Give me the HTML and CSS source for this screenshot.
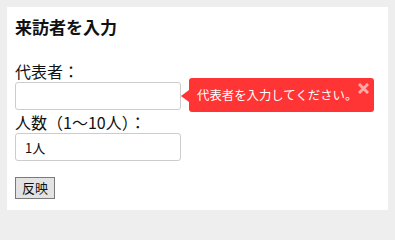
FILE: index.html
```html
<!DOCTYPE html>
<html lang="ja">
<head>
<meta charset="utf-8">
<link rel="stylesheet" href="styles.css">
</head>
<body>
<div class="panel">
  <h3 class="title">来訪者を入力</h3>
  <label class="label first">代表者：</label>
  <div class="field">
    <input class="input" type="text" value="">
    <div class="tip">
      <span class="tip-text">代表者を入力してください。</span>
      <svg class="tip-close" width="11" height="11" viewBox="0 0 11 11"><path d="M2 2 L9 9 M9 2 L2 9" stroke="currentColor" stroke-width="3" stroke-linecap="square"/></svg>
    </div>
  </div>
  <label class="label">人数（1〜10人）：</label>
  <div class="field">
    <input class="input" type="text" value="1人">
  </div>
  <button class="btn">反映</button>
</div>
</body>
</html>
```
FILE: styles.css
```css
html, body {
  margin: 0;
  padding: 0;
}
body {
  background: #eeeeee;
  padding: 7px;
  font-family: "Noto Sans CJK JP", "Noto Sans", sans-serif;
  color: #111;
}
.panel {
  background: #fff;
  width: 381px;
  box-sizing: border-box;
  padding: 10px 8px 11px;
  display: flex;
  flex-direction: column;
  align-items: flex-start;
}
.title {
  margin: 0;
  font-size: 17px;
  line-height: 20px;
  font-weight: bold;
}
.label {
  display: block;
  font-size: 16px;
  line-height: 18px;
  margin-top: 3px;
}
.label.first {
  margin-top: 25px;
}
.field {
  position: relative;
  margin-top: 2px;
}
.input {
  display: block;
  width: 166px;
  height: 28px;
  box-sizing: border-box;
  border: 1px solid #cccccc;
  border-radius: 3px;
  padding: 0 9px;
  font-family: "Noto Sans CJK JP", sans-serif;
  font-size: 13px;
  color: #111;
  outline: none;
}
.tip {
  position: absolute;
  left: 174px;
  top: -4px;
  width: 185px;
  height: 34px;
  box-sizing: border-box;
  background: #ff3434;
  border-radius: 3px;
  display: flex;
  align-items: center;
  padding-left: 8px;
}
.tip::before {
  content: "";
  position: absolute;
  left: -8px;
  top: 12px;
  border-style: solid;
  border-width: 6px 8px 6px 0;
  border-color: transparent #ff3434 transparent transparent;
}
.tip-text {
  color: #fff;
  font-size: 12.4px;
  line-height: 16px;
}
.tip-close {
  position: absolute;
  right: 5px;
  top: 5px;
  color: #ffa8a8;
}
.btn {
  margin-top: 16px;
  width: 40px;
  height: 22px;
  padding: 0;
  box-sizing: border-box;
  background: #e3e3e3;
  border: 1px solid #7a7a7a;
  border-radius: 0;
  font-family: "Noto Sans CJK JP", sans-serif;
  font-size: 13px;
  line-height: 20px;
  color: #111;
}
```
